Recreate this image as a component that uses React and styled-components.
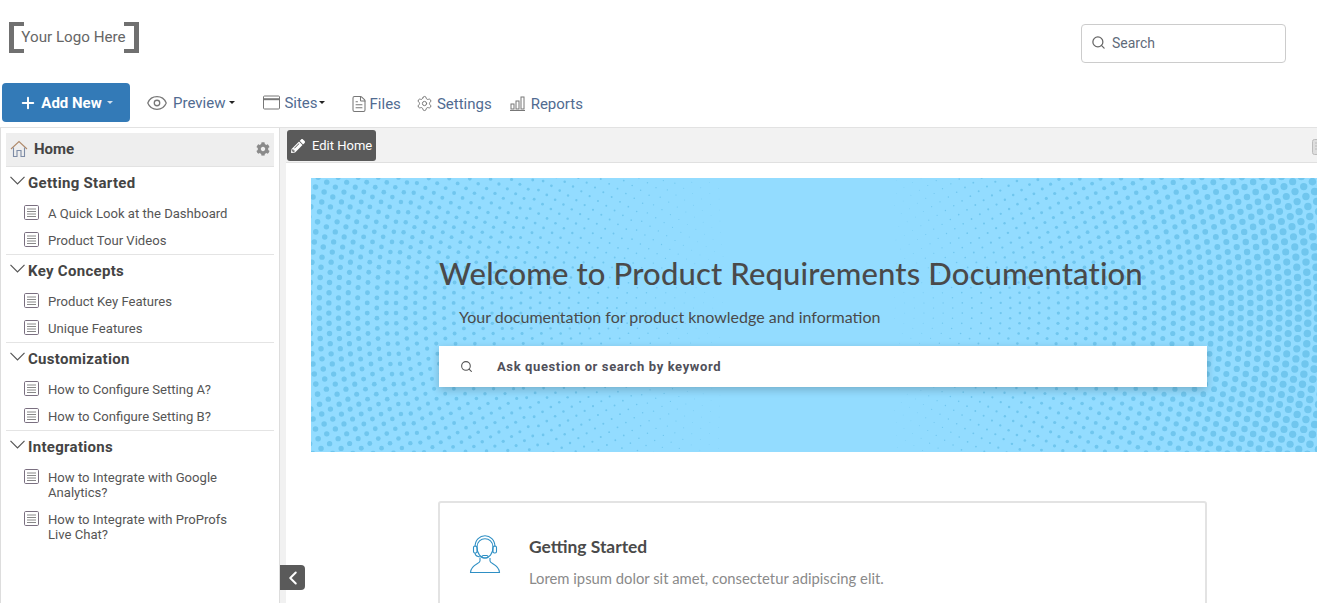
import React from 'react';
import styled, { createGlobalStyle } from 'styled-components';
import { FaCog, FaPencilAlt } from 'react-icons/fa';
import { Eye, Plus, Search, Settings, FileText, ChevronLeft } from 'lucide-react';

const GlobalStyle = createGlobalStyle`
   html, body {
      margin: 0;
      height: 100%;
      overflow: hidden;
      background: #fff;
      font-family: Roboto, "Liberation Sans", sans-serif;
   }
`;

const sections = [
   { title: 'Getting Started', items: ['A Quick Look at the Dashboard', 'Product Tour Videos'] },
   { title: 'Key Concepts', items: ['Product Key Features', 'Unique Features'] },
   { title: 'Customization', items: ['How to Configure Setting A?', 'How to Configure Setting B?'] },
   {
      title: 'Integrations',
      items: ['How to Integrate with Google Analytics?', 'How to Integrate with ProProfs Live Chat?'],
   },
];

// halftone: rings of dots around a point, size follows the sideways distance
const buildDots = () => {
   const cx = 469;
   const cy = 130;
   const dots = [];
   for (let ring = 1; ring < 95; ring++) {
      const radius = ring * 9.6;
      const count = Math.round((Math.PI * 2 * radius) / 10.2);
      for (let i = 0; i < count; i++) {
         const a = ((i + (ring % 2) * 0.5) / count) * Math.PI * 2;
         const x = cx + Math.cos(a) * radius;
         const y = cy + Math.sin(a) * radius;
         if (x < -5 || x > 1011 || y < -5 || y > 279) continue;
         const dx = Math.abs(x - cx);
         const r = x < cx ? 0.0062 * dx - 0.1 : 0.0084 * (dx - 120) + 0.3;
         if (r > 0.25) dots.push({ x, y, r: Math.min(5, r) });
      }
   }
   return dots;
};

const dots = buildDots();

const Page = styled.div`
   width: 1317px;
   height: 603px;
   overflow: hidden;
   display: flex;
   flex-direction: column;
`;

const Header = styled.header`
   height: 83px;
   flex: none;
   display: flex;
   justify-content: space-between;
   padding: 22px 31px 0 9px;
   box-sizing: border-box;
`;

const Logo = styled.div`
   display: flex;
   width: 130px;
   height: 31px;
   justify-content: space-between;
   align-items: center;
   color: #666;
   font-size: 15.2px;
`;

const LogoText = styled.span`
   margin: 0 -4px 0 -5px;
   padding-bottom: 2px;
   white-space: nowrap;
`;

const Bracket = styled.span`
   flex: none;
   width: 15px;
   height: 31px;
   box-sizing: border-box;
   border: solid #707070;
   border-width: 4px 5px;
   border-${(p) => (p.$side === 'left' ? 'right' : 'left')}: 0;
`;

const SearchBox = styled.div`
   width: 205px;
   height: 39px;
   margin-top: 2px;
   padding: 0 0 2px 9px;
   box-sizing: border-box;
   border: 1px solid #ccc;
   border-radius: 4px;
   display: flex;
   align-items: center;
   gap: 6px;
   font-size: 14px;
   color: #5f6b7a;
   svg {
      color: #666;
   }
`;

const Nav = styled.nav`
   height: 44px;
   flex: none;
   display: flex;
   align-items: flex-start;
   padding-left: 2px;
`;

const AddButton = styled.button`
   width: 128px;
   height: 39px;
   border: 0;
   border-radius: 4px;
   background: #337ab7;
   color: #fff;
   font: 700 15px Roboto, sans-serif;
   display: flex;
   align-items: center;
   justify-content: center;
   gap: 4px;
   padding: 0;
`;

const NavItem = styled.a`
   display: flex;
   align-items: center;
   gap: ${(p) => p.$gap || 5}px;
   height: 39px;
   margin-left: ${(p) => p.$left}px;
   padding-top: ${(p) => (p.$low ? 2 : 0)}px;
   box-sizing: border-box;
   color: #516b91;
   font-size: 15px;
   svg {
      color: #777;
      flex: none;
   }
`;

const Caret = styled.span`
   width: 0;
   height: 0;
   margin-left: ${(p) => p.$left || 0}px;
   border: 3px solid transparent;
   border-top-color: ${(p) => p.$color || '#222'};
   border-bottom: 0;
`;

const Body = styled.div`
   position: relative;
   flex: 1;
   display: flex;
   min-height: 0;
   border-top: 1px solid #e2e2e2;
`;

const Sidebar = styled.aside`
   width: 280px;
   flex: none;
   box-sizing: border-box;
   border-left: 1px solid #ddd;
   border-right: 1px solid #ddd;
   padding: 5px 5px 0;
`;

const HomeRow = styled.div`
   height: 34px;
   padding: 0 4px 2px;
   box-sizing: border-box;
   background: #eee;
   border-bottom: 1px solid #e2e2e2;
   display: flex;
   align-items: center;
   gap: 6px;
   font-size: 15px;
   font-weight: 700;
   color: #444;
   > svg:last-child {
      margin-left: auto;
      color: #8a8a8a;
   }
`;

const Section = styled.section`
   padding-bottom: 1px;
   border-bottom: ${(p) => (p.$last ? 0 : '1px solid #e4e4e4')};
`;

const SectionTitle = styled.h3`
   margin: 0;
   height: 32px;
   display: flex;
   align-items: center;
   gap: 3px;
   padding-left: 4px;
   font-size: 15px;
   font-weight: 700;
   letter-spacing: 0.3px;
   color: #444;
`;

const Item = styled.a`
   display: flex;
   gap: 9px;
   padding: 7px 30px 5px 18px;
   font-size: 13.1px;
   line-height: 15px;
   color: #555;
   svg {
      flex: none;
      margin-top: -1px;
   }
`;

const Main = styled.main`
   flex: 1;
   min-width: 0;
   border-left: 6px solid #f1f1f1;
`;

const Toolbar = styled.div`
   height: 35px;
   box-sizing: border-box;
   background: #f2f2f2;
   border-bottom: 1px solid #e0e0e0;
   padding: 2px 0 0 1px;
   display: flex;
   align-items: flex-start;
   justify-content: space-between;
   > svg {
      flex: none;
      margin: 9px -11px 0 0;
   }
`;

const EditButton = styled.button`
   width: 89px;
   height: 31px;
   border: 0;
   border-radius: 3px;
   background: #5a5a5a;
   color: #fff;
   font: 13px Roboto, sans-serif;
   display: flex;
   align-items: center;
   gap: 7px;
   padding: 0 0 0 4px;
`;

const Hero = styled.section`
   position: relative;
   overflow: hidden;
   width: 1006px;
   height: 274px;
   margin: 15px 0 0 25px;
   box-sizing: border-box;
   background: #93dcff;
   padding: 75px 0 0 128px;
`;

const Dots = styled.svg`
   position: absolute;
   top: 0;
   left: 0;
`;

const HeroTitle = styled.h1`
   position: relative;
   margin: 0;
   font: 500 31px/40px Lato, sans-serif;
   letter-spacing: 0.15px;
   color: #4a4a4a;
   white-space: nowrap;
`;

const HeroSub = styled.p`
   position: relative;
   margin: 14px 0 0 20px;
   font: 16px/20px Lato, sans-serif;
   color: #4a4a4a;
`;

const HeroSearch = styled.div`
   position: relative;
   width: 768px;
   height: 41px;
   margin-top: 19px;
   background: #fff;
   box-shadow: 0 3px 8px rgba(0, 0, 0, 0.2);
   display: flex;
   align-items: center;
   gap: 24px;
   padding-left: 21px;
   box-sizing: border-box;
   font-size: 13px;
   font-weight: 700;
   letter-spacing: 0.62px;
   color: #50505a;
   svg {
      color: #555;
   }
`;

const Card = styled.article`
   width: 769px;
   height: 140px;
   margin: 49px 0 0 152px;
   box-sizing: border-box;
   border: 2px solid #e3e3e3;
   border-radius: 3px;
   display: flex;
   padding: 31px 0 0 29px;
   gap: 28px;
`;

const CardTitle = styled.h2`
   margin: 2px 0 0;
   font: 700 17.4px/22px Lato, sans-serif;
   color: #4a4a4a;
`;

const CardText = styled.p`
   margin: 10px 0 0;
   font: 14.8px/20px Lato, sans-serif;
   color: #8a8a8a;
`;

const CollapseButton = styled.button`
   position: absolute;
   left: 280px;
   top: 437px;
   width: 25px;
   height: 25px;
   border: 0;
   padding: 0;
   border-radius: 0 4px 4px 0;
   background: #5a5a5a;
   color: #fff;
   display: flex;
   align-items: center;
   justify-content: center;
`;

const HomeIcon = () => (
   <svg width="18" height="18" viewBox="0 0 18 18" fill="none" stroke="#8a8a8a" strokeWidth="1.1">
      <path d="M1 9 L9 1.5 L17 9" stroke="#b08a6a" />
      <path d="M3.5 7.5 V16.5 H7 V10.5 H11 V16.5 H14.5 V7.5" stroke="#7d8ba5" />
   </svg>
);

const DownChevron = () => (
   <svg width="15" height="9" viewBox="0 0 15 9" fill="none" stroke="#555" strokeWidth="1.2" style={{ marginTop: -6 }}>
      <path d="M0.5 0.8 L7.5 7.8 L14.5 0.8" />
   </svg>
);

const DocIcon = () => (
   <svg width="15" height="15" viewBox="0 0 15 15" fill="none">
      <rect x="0.5" y="0.5" width="14" height="14" rx="1.2" stroke="#7a6f80" />
      <path d="M3 4 H12 M3 6.5 H12 M3 9 H12 M3 11.5 H12" stroke="#888" />
   </svg>
);

const BrowserIcon = () => (
   <svg width="17" height="15" viewBox="0 0 17 15" fill="none" stroke="#777">
      <rect x="0.5" y="1" width="16" height="13" rx="1" />
      <path d="M0.5 4.2 H16.5" strokeWidth="2" />
   </svg>
);

const BarsIcon = () => (
   <svg width="15" height="15" viewBox="0 0 15 15" fill="none" stroke="#777">
      <rect x="1" y="8" width="3" height="5" />
      <rect x="6" y="5" width="3" height="8" />
      <rect x="11" y="1" width="3" height="12" />
      <path d="M0 14.5 H15" />
   </svg>
);

const TableIcon = () => (
   <svg width="16" height="16" viewBox="0 0 16 16" fill="#ddd" stroke="#bbb">
      <rect x="0.5" y="0.5" width="15" height="15" rx="2" />
      <path d="M3 4 H13 M3 7 H13 M3 10 H13" />
   </svg>
);

const HeadsetIcon = () => (
   <svg width="32" height="40" viewBox="0 0 32 40" fill="none" stroke="#2e8fc4" strokeWidth="1.1" style={{ flex: 'none' }}>
      <path d="M6 13 C6 -2 26 -2 26 13" />
      <path d="M8 13 C8 2 24 2 24 13 C24 20 20 24 16 24 C12 24 8 20 8 13 Z" />
      <rect x="4.5" y="12" width="3.5" height="7" rx="1.5" />
      <rect x="24" y="12" width="3.5" height="7" rx="1.5" />
      <path d="M6 19 C6 22 10 23 13 23" />
      <rect x="13" y="21.5" width="6" height="2.5" rx="1.2" />
      <path d="M11 24 V27 C11 30 2 30 1.5 38.5 H30.5 C30 30 21 30 21 27 V24" />
   </svg>
);

const App = () => {
   return (
      <Page>
         <GlobalStyle />
         <Header>
            <Logo>
               <Bracket $side="left" />
               <LogoText>Your Logo Here</LogoText>
               <Bracket $side="right" />
            </Logo>
            <SearchBox>
               <Search size={15} />
               Search
            </SearchBox>
         </Header>

         <Nav>
            <AddButton>
               <Plus size={18} strokeWidth={2.6} />
               Add New
               <Caret $left={1} $color="#cfe0ef" />
            </AddButton>
            <NavItem $left={16} $gap={5}>
               <Eye size={22} strokeWidth={1.4} />
               Preview
               <Caret $left={-1} />
            </NavItem>
            <NavItem $left={28} $gap={4}>
               <BrowserIcon />
               Sites
               <Caret $left={-3} />
            </NavItem>
            <NavItem $left={25} $gap={2} $low>
               <FileText size={18} strokeWidth={1.4} />
               Files
            </NavItem>
            <NavItem $left={15} $gap={4} $low>
               <Settings size={17} strokeWidth={1.4} />
               Settings
            </NavItem>
            <NavItem $left={18} $gap={6} $low>
               <BarsIcon />
               Reports
            </NavItem>
         </Nav>

         <Body>
            <Sidebar>
               <HomeRow>
                  <HomeIcon />
                  Home
                  <FaCog size={14} />
               </HomeRow>
               {sections.map((section, i) => (
                  <Section key={section.title} $last={i === sections.length - 1}>
                     <SectionTitle>
                        <DownChevron />
                        {section.title}
                     </SectionTitle>
                     {section.items.map((item) => (
                        <Item key={item}>
                           <DocIcon />
                           {item}
                        </Item>
                     ))}
                  </Section>
               ))}
            </Sidebar>

            <Main>
               <Toolbar>
                  <EditButton>
                     <FaPencilAlt size={14} />
                     Edit Home
                  </EditButton>
                  <TableIcon />
               </Toolbar>

               <Hero>
                  <Dots width="1006" height="274" viewBox="0 0 1006 274">
                     {dots.map((d, i) => (
                        <circle key={i} cx={d.x} cy={d.y} r={d.r} fill="#70c6ee" />
                     ))}
                  </Dots>
                  <HeroTitle>Welcome to Product Requirements Documentation</HeroTitle>
                  <HeroSub>Your documentation for product knowledge and information</HeroSub>
                  <HeroSearch>
                     <Search size={13} />
                     Ask question or search by keyword
                  </HeroSearch>
               </Hero>

               <Card>
                  <HeadsetIcon />
                  <div>
                     <CardTitle>Getting Started</CardTitle>
                     <CardText>Lorem ipsum dolor sit amet, consectetur adipiscing elit.</CardText>
                  </div>
               </Card>
            </Main>

            <CollapseButton>
               <ChevronLeft size={22} strokeWidth={2.2} />
            </CollapseButton>
         </Body>
      </Page>
   );
};

export default App;
